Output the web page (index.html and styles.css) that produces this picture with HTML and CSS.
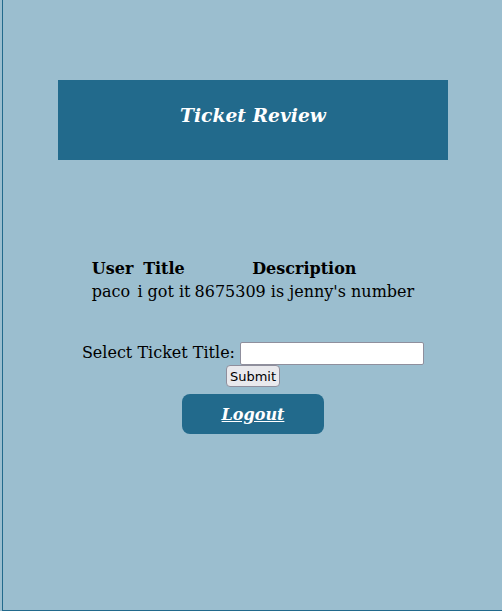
FILE: index.html
```html
<!DOCTYPE html>
<html lang="en">
<head>
  <meta charset="UTF-8">
  <meta name="viewport" content="width=device-width, initial-scale=1.0">
  <title>Ticket Review</title>
  <link rel="stylesheet" href="styles.css">
</head>
<body>
  <div class="page">
    <div class="header">
      <h2 class="header-title">Ticket Review</h2>
    </div>
    <table class="ticket-table">
      <tr>
        <th>User</th>
        <th>Title</th>
        <th>Description</th>
      </tr>
      <tr>
        <td>paco</td>
        <td>i got it</td>
        <td>8675309 is jenny's number</td>
      </tr>
    </table>
    <form class="ticket-form">
      <label for="ticketTitle">Select Ticket Title:</label>
      <input id="ticketTitle" type="text">
      <button type="button">Submit</button>
    </form>
    <a href="#" class="logout-button">Logout</a>
  </div>
</body>
</html>
```

FILE: styles.css
```css
html {
  background-color: #9bbecf;
}

body {
  margin: 0;
  font-family: "DejaVu Serif", serif;
  font-size: 16px;
  color: #000;
}

.page {
  box-sizing: border-box;
  margin-left: 2px;
  width: 501px;
  height: 611px;
  padding-top: 80px;
  border-left: 1px solid #226a8c;
  border-bottom: 1px solid #226a8c;
  display: flex;
  flex-direction: column;
  align-items: center;
}

.header {
  box-sizing: border-box;
  width: 390px;
  height: 80px;
  padding-top: 23px;
  background-color: #226a8c;
  text-align: center;
}

.header-title {
  margin: 0;
  font-size: 18.72px;
  line-height: 24px;
  font-style: italic;
  color: #fff;
}

.ticket-table {
  margin-top: 96px;
}

.ticket-form {
  margin-top: 37px;
  width: 360px;
  text-align: center;
  line-height: 23px;
}

.ticket-form input {
  box-sizing: border-box;
  width: 184px;
  height: 23px;
  border: 1px solid #8f8f9d;
  border-radius: 2px;
  background-color: #fff;
}

.ticket-form button {
  box-sizing: border-box;
  height: 22px;
  padding: 0 3px;
  border: 1px solid #8f8f9d;
  border-radius: 4px;
  background-color: #e9e9ed;
  font-family: "DejaVu Sans", sans-serif;
  font-size: 13px;
  line-height: 19px;
  color: #000;
  vertical-align: top;
}

.logout-button {
  box-sizing: border-box;
  margin-top: 6px;
  width: 142px;
  height: 40px;
  padding-top: 11px;
  border-radius: 8px;
  background-color: #226a8c;
  color: #fff;
  font-weight: bold;
  font-style: italic;
  font-size: 16px;
  text-align: center;
}
```
